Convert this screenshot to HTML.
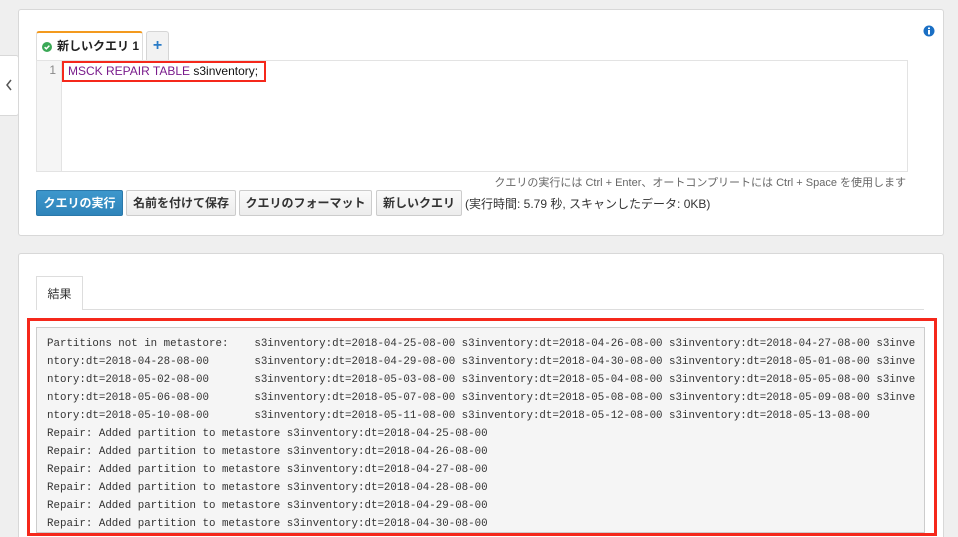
<!DOCTYPE html>
<html style="overflow:hidden;height:537px"><head><meta charset="utf-8"><style>
*{box-sizing:border-box;margin:0;padding:0}
body{width:958px;height:537px;overflow:hidden;background:#efefef;position:relative;font-family:"Liberation Sans","Noto Sans CJK JP",sans-serif;color:#333}
.abs{position:absolute}
.panel{position:absolute;background:#fff;border:1px solid #d8d8d8;border-radius:3px}
.btn{position:absolute;top:190px;height:26px;border:1px solid #ccc;border-radius:2px;background:linear-gradient(#fafafa,#ececec);font-size:12px;font-weight:bold;line-height:24px;text-align:center;color:#333}
.mono{font-family:"Liberation Mono",monospace;font-size:10.8px;line-height:18px;white-space:pre;color:#333}
</style></head><body>
<div class="abs" style="left:0;top:55px;width:19px;height:61px;background:#fff;border:1px solid #d8d8d8;border-left:none;border-radius:0 3px 3px 0"></div>
<svg class="abs" style="left:5px;top:78px" width="8" height="14"><path d="M6 2L2 7L6 12" stroke="#555" stroke-width="1.5" fill="none"/></svg>
<div class="panel" style="left:18px;top:9px;width:926px;height:227px"></div>
<svg class="abs" style="left:923px;top:25px" width="12" height="12"><circle cx="6" cy="6" r="5.5" fill="#1a6fc4"/><rect x="5" y="5" width="2" height="4.5" fill="#fff"/><rect x="5" y="2.5" width="2" height="1.6" fill="#fff"/></svg>
<div class="abs" style="left:36px;top:31px;width:107px;height:30px;background:#fff;border:1px solid #ddd;border-top:2px solid #f39a1e;border-bottom:none;border-radius:3px 3px 0 0;font-size:12px;font-weight:bold;line-height:27px;padding-left:20px;color:#222">新しいクエリ 1</div>
<svg class="abs" style="left:42px;top:42px" width="10" height="10"><circle cx="5" cy="5" r="5" fill="#3aa856"/><path d="M2.6 5.2L4.3 6.8L7.4 3.6" stroke="#fff" stroke-width="1.5" fill="none"/></svg>
<div class="abs" style="left:146px;top:31px;width:23px;height:29px;background:#f2f2f2;border:1px solid #d5d5d5;border-bottom:none;border-radius:3px 3px 0 0;color:#2a7cc7;font-size:16px;font-weight:bold;text-align:center;line-height:27px">+</div>
<div class="abs" style="left:36px;top:60px;width:872px;height:112px;border:1px solid #e3e3e3;background:#fff"></div>
<div class="abs" style="left:37px;top:61px;width:25px;height:110px;background:#f5f5f5;border-right:1px solid #e3e3e3;font-size:12px;color:#888;text-align:right;padding-right:5px;line-height:18px">1</div>
<div class="abs" style="left:62px;top:61px;width:204px;height:21px;border:2px solid #f5281b;font-size:12px;line-height:17px;padding-left:4px;color:#111"><span style="color:#7a1c8c">MSCK REPAIR TABLE</span> s3inventory;</div>
<div class="abs" style="left:400px;top:174px;width:506px;text-align:right;font-size:11px;color:#666">クエリの実行には Ctrl + Enter、オートコンプリートには Ctrl + Space を使用します</div>
<div class="btn" style="left:36px;width:87px;background:linear-gradient(#3d97cc,#2f84ba);border-color:#2a78aa;color:#fff">クエリの実行</div>
<div class="btn" style="left:126px;width:110px">名前を付けて保存</div>
<div class="btn" style="left:239px;width:133px">クエリのフォーマット</div>
<div class="btn" style="left:376px;width:86px">新しいクエリ</div>
<div class="abs" style="left:465px;top:195px;font-size:12px;color:#333">(実行時間: 5.79 秒, スキャンしたデータ: 0KB)</div>

<div class="panel" style="left:18px;top:253px;width:926px;height:284px;border-bottom:none;border-radius:3px 3px 0 0"></div>
<div class="abs" style="left:36px;top:309px;width:888px;height:1px;background:#ddd"></div>
<div class="abs" style="left:36px;top:276px;width:47px;height:34px;background:#fff;border:1px solid #ddd;border-bottom:none;font-size:12px;text-align:center;line-height:34px;color:#333">結果</div>
<div class="abs" style="left:27px;top:318px;width:910px;height:218px;border:3px solid #f5281b"></div>
<div class="abs" style="left:36px;top:327px;width:889px;height:206px;background:#f5f5f5;border:1px solid #ccc;overflow:hidden;padding:7px 0 0 10px"><div class="mono">Partitions not in metastore:    s3inventory:dt=2018-04-25-08-00 s3inventory:dt=2018-04-26-08-00 s3inventory:dt=2018-04-27-08-00 s3inve
ntory:dt=2018-04-28-08-00       s3inventory:dt=2018-04-29-08-00 s3inventory:dt=2018-04-30-08-00 s3inventory:dt=2018-05-01-08-00 s3inve
ntory:dt=2018-05-02-08-00       s3inventory:dt=2018-05-03-08-00 s3inventory:dt=2018-05-04-08-00 s3inventory:dt=2018-05-05-08-00 s3inve
ntory:dt=2018-05-06-08-00       s3inventory:dt=2018-05-07-08-00 s3inventory:dt=2018-05-08-08-00 s3inventory:dt=2018-05-09-08-00 s3inve
ntory:dt=2018-05-10-08-00       s3inventory:dt=2018-05-11-08-00 s3inventory:dt=2018-05-12-08-00 s3inventory:dt=2018-05-13-08-00
Repair: Added partition to metastore s3inventory:dt=2018-04-25-08-00
Repair: Added partition to metastore s3inventory:dt=2018-04-26-08-00
Repair: Added partition to metastore s3inventory:dt=2018-04-27-08-00
Repair: Added partition to metastore s3inventory:dt=2018-04-28-08-00
Repair: Added partition to metastore s3inventory:dt=2018-04-29-08-00
Repair: Added partition to metastore s3inventory:dt=2018-04-30-08-00</div></div>
</body></html>
